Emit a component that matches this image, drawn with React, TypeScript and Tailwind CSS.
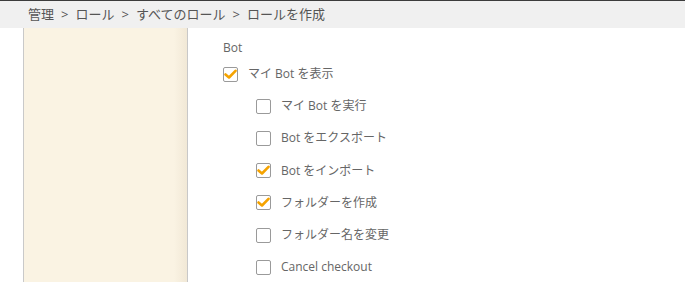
import React from "react";

const Check = ({ checked }: { checked: boolean }) => (
  <span className="w-[15px] h-[15px] border border-[#9a9a9a] rounded-[2px] bg-white flex items-center justify-center shrink-0">
    {checked && (
      <svg width="13" height="11" viewBox="0 0 13 11">
        <path d="M1.5 5.5 L5 8.5 L11.5 1.8" fill="none" stroke="#f5a300" strokeWidth="2.6" strokeLinecap="round" strokeLinejoin="round" />
      </svg>
    )}
  </span>
);

const Row = ({ label, checked, indent }: { label: string; checked: boolean; indent?: boolean }) => (
  <div className={`flex items-center h-[32.2px] gap-[10px] ${indent ? "pl-[33px]" : ""}`}>
    <Check checked={checked} />
    <span>{label}</span>
  </div>
);

export default function App() {
  return (
    <div className="w-[685px] h-[282px] overflow-hidden bg-white flex flex-col text-[12px] text-[#666]" style={{ fontFamily: '"Open Sans", "Noto Sans CJK JP", sans-serif' }}>
      <div className="h-[28px] shrink-0 bg-[#f0f0f0] border-t border-[#3c3c3c] flex items-center pl-[28px] gap-[7px] text-[13px] text-[#555]">
        <span>管理</span><span>&gt;</span><span>ロール</span><span>&gt;</span><span>すべてのロール</span><span>&gt;</span><span>ロールを作成</span>
      </div>
      <div className="flex flex-1 min-h-0">
        <div className="w-[23px] shrink-0" />
        <div className="w-[165px] shrink-0 border-l border-[#c9c9c9] border-r border-r-[#c8c8c8] bg-[linear-gradient(to_right,#faf3e3_0%,#faf3e3_92%,#f1e8d6_100%)]" />
        <div className="flex-1 pl-[35px] pt-[9px]">
          <div className="h-[21px] flex items-center">Bot</div>
          <Row label="マイ Bot を表示" checked />
          <Row label="マイ Bot を実行" checked={false} indent />
          <Row label="Bot をエクスポート" checked={false} indent />
          <Row label="Bot をインポート" checked indent />
          <Row label="フォルダーを作成" checked indent />
          <Row label="フォルダー名を変更" checked={false} indent />
          <Row label="Cancel checkout" checked={false} indent />
        </div>
      </div>
    </div>
  );
}
